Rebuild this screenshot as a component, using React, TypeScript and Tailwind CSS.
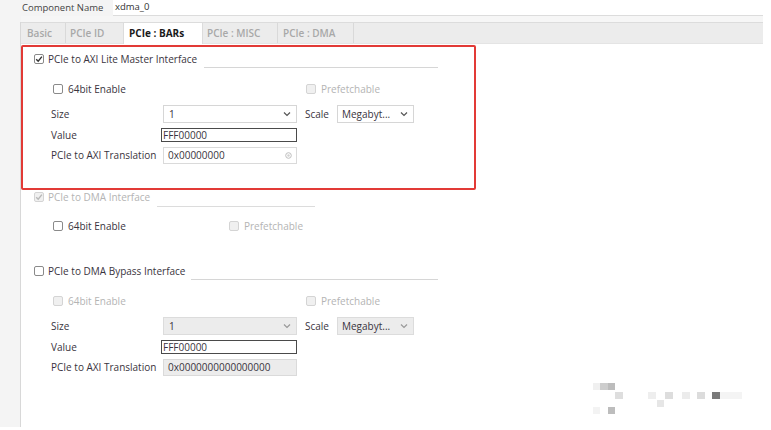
import React from "react";

function Check({ checked = false, disabled = false }: { checked?: boolean; disabled?: boolean }) {
  return (
    <div
      className={
        "w-[10px] h-[10px] rounded-[2px] border flex items-center justify-center shrink-0 " +
        (disabled ? "border-[#d4d4d4] bg-[#f0f0f0]" : "border-[#8a8a8a] bg-white")
      }
    >
      {checked && (
        <svg width="8" height="8" viewBox="0 0 8 8">
          <path
            d="M1.2 4.2 L3.2 6.2 L6.9 1.6"
            fill="none"
            stroke={disabled ? "#b8b8b8" : "#333"}
            strokeWidth="1.4"
          />
        </svg>
      )}
    </div>
  );
}

function Chevron({ color = "#555" }: { color?: string }) {
  return (
    <svg width="8" height="6" viewBox="0 0 8 6">
      <path d="M1 1.5 L4 4.5 L7 1.5" fill="none" stroke={color} strokeWidth="1.2" />
    </svg>
  );
}

function Section({ disabled }: { disabled: boolean }) {
  const sel = disabled ? "bg-[#ececec] border-[#dcdcdc]" : "bg-white border-[#d6d6d6]";
  const chev = disabled ? "#999" : "#555";
  return (
    <>
      <div className="flex items-center h-[18px] mt-[9px] pl-[28px]">
        <div className="w-[112px]">Size</div>
        <div className={"w-[134px] h-[18px] border flex items-center justify-between pl-[5px] pr-[5px] " + sel}>
          <span>1</span>
          <Chevron color={chev} />
        </div>
        <div className="ml-[8px] w-[32px]">Scale</div>
        <div className={"w-[77px] h-[18px] border flex items-center justify-between pl-[4px] pr-[5px] " + sel}>
          <span>Megabyt...</span>
          <Chevron color={chev} />
        </div>
      </div>
      <div className="flex items-center h-[14px] mt-[5px] pl-[28px]">
        <div className="w-[110px]">Value</div>
        <div className="w-[136px] h-[14px] border border-[#4a4a4a] bg-white flex items-center pl-[1px] leading-none">
          FFF00000
        </div>
      </div>
    </>
  );
}

export default function App() {
  return (
    <div className="w-[771px] h-[430px] bg-white relative overflow-hidden font-['Open_Sans',sans-serif] text-[10px] text-[#3a3440]">
      {/* top row */}
      <div className="flex h-[16px] bg-[#f4f4f4] w-[763px]">
        <div className="w-[113px] pl-[22px] flex items-center text-[9.5px] text-[#444]">Component Name</div>
        <div className="flex-1 bg-white border-b border-[#dcdcdc] flex items-center pl-[2px] text-[9.5px] text-[#333]">
          xdma_0
        </div>
      </div>
      <div className="h-[6px] w-[763px] bg-[#f6f6f6] flex">
        <div className="w-[21px] bg-[#f4f4f4]" />
      </div>
      <div className="flex h-[405px] w-[763px]">
        <div className="w-[21px] bg-[#f4f4f4] border-r border-[#d8d8d8] shrink-0" />
        <div className="flex-1 flex flex-col border-t border-[#dcdcdc] bg-white">
          {/* tabs */}
          <div className="h-[21px] bg-[#ececec] flex items-stretch text-[10px] font-semibold text-[#a8a8a8] border-b border-[#e4e4e4]">
            <div className="w-[45px] flex items-center pl-[6px] border-r border-[#d9d9d9]">Basic</div>
            <div className="w-[57px] flex items-center pl-[4px]">PCIe ID</div>
            <div className="w-[80px] flex items-center pl-[5px] bg-white text-[#1a1a1a] font-bold -mb-px border-l border-r border-[#dcdcdc]">
              PCIe : BARs
            </div>
            <div className="w-[75px] flex items-center pl-[4px] border-r border-[#d9d9d9]">PCIe : MISC</div>
            <div className="w-[76px] flex items-center pl-[5px] border-r border-[#d9d9d9]">PCIe : DMA</div>
          </div>

          {/* red box */}
          <div className="mt-[1px] w-[455px] h-[145px] border-2 border-[#e23a36] rounded-[2px] flex flex-col">
            <div className="flex h-[14px] mt-[5px] pl-[11px]">
              <div className="flex items-center h-[14px] gap-[4px]">
                <Check checked />
                <span>PCIe to AXI Lite Master Interface</span>
              </div>
              <div className="mt-[15px] ml-[7px] w-[234px] h-px bg-[#d6d6d6]" />
            </div>
            <div className="flex items-center h-[14px] mt-[16px] pl-[30px]">
              <div className="w-[253px] flex items-center gap-[5px]">
                <Check />
                <span>64bit Enable</span>
              </div>
              <div className="flex items-center gap-[5px] text-[#b4b4b4]">
                <Check disabled />
                <span>Prefetchable</span>
              </div>
            </div>
            <Section disabled={false} />
            <div className="flex items-center h-[17px] mt-[5px] pl-[28px]">
              <div className="w-[112px]">PCIe to AXI Translation</div>
              <div className="w-[134px] h-[17px] border border-[#dadada] bg-white flex items-center justify-between pl-[4px] pr-[4px]">
                <span>0x00000000</span>
                <svg width="7" height="7" viewBox="0 0 7 7">
                  <circle cx="3.5" cy="3.5" r="2.8" fill="none" stroke="#bdbdbd" strokeWidth="1" />
                  <circle cx="3.5" cy="3.5" r="1.2" fill="#d0d0d0" />
                </svg>
              </div>
            </div>
          </div>

          {/* DMA interface */}
          <div className="flex h-[14px] pl-[13px]">
            <div className="flex items-center h-[14px] gap-[4px] text-[#b4b4b4]">
              <Check checked disabled />
              <span>PCIe to DMA Interface</span>
            </div>
            <div className="mt-[16px] ml-[7px] w-[158px] h-px bg-[#dcdcdc]" />
          </div>
          <div className="flex items-center h-[14px] mt-[15px] pl-[32px]">
            <div className="w-[176px] flex items-center gap-[5px]">
              <Check />
              <span>64bit Enable</span>
            </div>
            <div className="flex items-center gap-[5px] text-[#b4b4b4]">
              <Check disabled />
              <span>Prefetchable</span>
            </div>
          </div>

          {/* Bypass */}
          <div className="flex h-[14px] mt-[31px] pl-[13px]">
            <div className="flex items-center h-[14px] gap-[4px]">
              <Check />
              <span>PCIe to DMA Bypass Interface</span>
            </div>
            <div className="mt-[15px] ml-[6px] w-[247px] h-px bg-[#d6d6d6]" />
          </div>
          <div className="flex items-center h-[14px] mt-[16px] pl-[32px] text-[#b4b4b4]">
            <div className="w-[253px] flex items-center gap-[5px]">
              <Check disabled />
              <span>64bit Enable</span>
            </div>
            <div className="flex items-center gap-[5px]">
              <Check disabled />
              <span>Prefetchable</span>
            </div>
          </div>
          <div className="pl-[2px]">
            <div className="flex flex-col">
              <Section disabled />
              <div className="flex items-center h-[17px] mt-[5px] pl-[28px]">
                <div className="w-[112px]">PCIe to AXI Translation</div>
                <div className="w-[134px] h-[17px] border border-[#dadada] bg-[#ececec] flex items-center pl-[4px]">
                  0x0000000000000000
                </div>
              </div>
            </div>
          </div>
        </div>
      </div>

      {/* watermark */}
      <svg className="absolute left-[590px] top-[380px]" width="160" height="40" viewBox="0 0 160 40">
        <rect x="3" y="3" width="7" height="7" fill="#f0f0f0" />
        <rect x="10" y="3" width="8" height="7" fill="#cdcdcd" />
        <rect x="18" y="3" width="7" height="7" fill="#bcbcbc" />
        <rect x="25" y="12" width="8" height="7" fill="#dedede" />
        <rect x="58" y="12" width="8" height="7" fill="#eeeeee" />
        <rect x="75" y="12" width="8" height="7" fill="#dddddd" />
        <rect x="92" y="12" width="8" height="7" fill="#ececec" />
        <rect x="107" y="12" width="8" height="7" fill="#dcdcdc" />
        <rect x="122" y="12" width="8" height="7" fill="#7a7a7a" />
        <rect x="130" y="12" width="22" height="7" fill="#f4f4f4" />
        <rect x="67" y="20" width="7" height="7" fill="#e6e6e6" />
        <rect x="3" y="27" width="7" height="7" fill="#f3f3f3" />
        <rect x="18" y="27" width="7" height="7" fill="#bdbdbd" />
      </svg>
    </div>
  );
}
